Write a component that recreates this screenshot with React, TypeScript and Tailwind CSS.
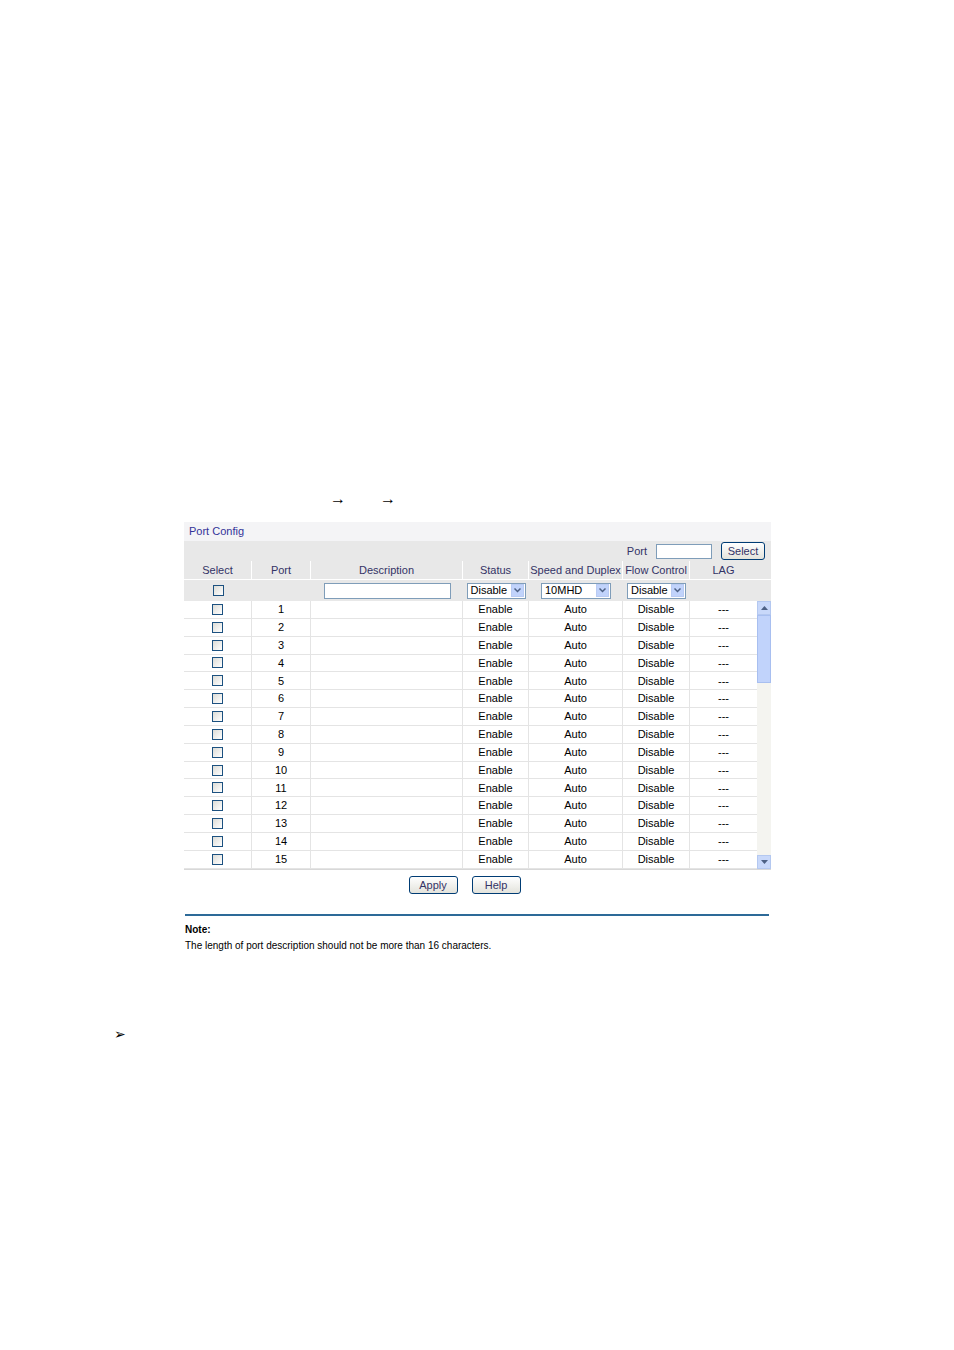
import React from 'react';

const cols = 'grid grid-cols-[68px_59px_152px_66px_94px_67px_67px_14px]';
const font = { fontFamily: '"Liberation Sans", Arial, sans-serif' };

const Check = () => (
  <span className="inline-block w-[11px] h-[11px] border border-[#1c5180] bg-gradient-to-br from-[#dcdcd7] to-white" />
);

const Sel = ({ label, w }: { label: string; w: string }) => (
  <div className={`${w} h-[16px] border border-[#7f9db9] bg-white flex items-center justify-between pl-[3px] text-[11px] text-black`}>
    <span>{label}</span>
    <span className="w-[13px] h-[13px] mr-[1px] bg-[#c1d3fb] border border-[#b9cbf3] flex items-center justify-center">
      <svg width="7" height="5" viewBox="0 0 7 5"><path d="M0.5 0.5 L3.5 3.5 L6.5 0.5" stroke="#4d6185" strokeWidth="1.5" fill="none" /></svg>
    </span>
  </div>
);

const Btn = ({ label }: { label: string }) => (
  <button className="w-[49px] h-[18px] border border-[#003c74] rounded-[3px] bg-gradient-to-b from-white to-[#e3e3dc] text-[11px] text-[#333366]">{label}</button>
);

export default function App() {
  const rows = Array.from({ length: 15 }, (_, i) => i + 1);
  return (
    <div className="w-[954px] h-[1350px] bg-white relative" style={font}>
      <div className="h-[487px]" />
      <div className="flex text-[16px] text-black h-[22px]">
        <span className="ml-[330px]">→</span>
        <span className="ml-[34px]">→</span>
      </div>
      <div className="h-[13px]" />
      <div className="ml-[184px] w-[587px]">
        <div className="h-[19px] bg-[#f4f4f6] text-[11px] text-[#333399] pl-[5px] flex items-center">Port Config</div>
        <div className="h-[20px] bg-[#e8e8e8] flex items-center justify-end pr-[6px] text-[11px] text-[#333366]">
          <span className="mr-[9px]">Port</span>
          <span className="w-[56px] h-[15px] border border-[#7f9db9] bg-white mr-[9px]" />
          <button className="w-[44px] h-[18px] border border-[#003c74] rounded-[3px] bg-gradient-to-b from-white to-[#e3e3dc] text-[11px] text-[#333366]">Select</button>
        </div>
        <div className={`${cols} h-[18px] bg-[#e8e8e8] text-[11px] text-[#333366] text-center items-center`}>
          {['Select', 'Port', 'Description', 'Status', 'Speed and Duplex', 'Flow Control', 'LAG', ''].map((h, i) => (
            <div key={i} className={`h-full flex items-center justify-center ${i < 6 ? 'border-r border-white' : ''} ${i === 4 ? 'whitespace-nowrap' : ''}`}>{h}</div>
          ))}
        </div>
        <div className={`${cols} h-[22px] bg-[#e8e8e8] items-center border-t border-white`}>
          <div className="flex justify-center"><Check /></div>
          <div />
          <div className="flex justify-center"><span className="w-[127px] h-[16px] border border-[#7f9db9] bg-white" /></div>
          <div className="flex justify-center"><Sel label="Disable" w="w-[59px]" /></div>
          <div className="flex justify-center"><Sel label="10MHD" w="w-[70px]" /></div>
          <div className="flex justify-center"><Sel label="Disable" w="w-[59px]" /></div>
          <div />
          <div />
        </div>
        <div className="flex border-b border-[#d8d8d8]">
          <div>
            {rows.map(n => (
              <div key={n} className={`${cols.replace('_14px', '')} grid-cols-[68px_59px_152px_66px_94px_67px_67px] h-[17.85px] text-[11px] text-black text-center items-center border-b border-[#e4e4e4]`}>
                <div className="flex justify-center border-r border-[#e4e4e4] h-full items-center"><Check /></div>
                <div className="border-r border-[#e4e4e4] h-full flex items-center justify-center">{n}</div>
                <div className="border-r border-[#e4e4e4] h-full" />
                <div className="border-r border-[#e4e4e4] h-full flex items-center justify-center">Enable</div>
                <div className="border-r border-[#e4e4e4] h-full flex items-center justify-center">Auto</div>
                <div className="border-r border-[#e4e4e4] h-full flex items-center justify-center">Disable</div>
                <div className="h-full flex items-center justify-center">---</div>
              </div>
            ))}
          </div>
          <div className="w-[14px] bg-[#f4f4f0] flex flex-col">
            <div className="h-[14px] bg-[#c8d8fa] border border-[#b4c8f0] flex items-center justify-center">
              <svg width="7" height="4" viewBox="0 0 7 4"><path d="M0 4 L3.5 0 L7 4Z" fill="#4d6185" /></svg>
            </div>
            <div className="h-[68px] bg-[#c1d3fb] border border-[#a8bff0]" />
            <div className="flex-1" />
            <div className="h-[14px] bg-[#c8d8fa] border border-[#b4c8f0] flex items-center justify-center">
              <svg width="7" height="4" viewBox="0 0 7 4"><path d="M0 0 L3.5 4 L7 0Z" fill="#4d6185" /></svg>
            </div>
          </div>
        </div>
        <div className="flex justify-center gap-[14px] mt-[6px] pr-[26px]">
          <Btn label="Apply" />
          <Btn label="Help" />
        </div>
        <div className="mt-[20px] ml-[1px] w-[584px] border-t-2 border-[#2d6a98]" />
        <div className="text-[10px] text-black mt-[6px] ml-[1px] leading-[16px]">
          <div className="font-bold">Note:</div>
          <div>The length of port description should not be more than 16 characters.</div>
        </div>
      </div>
      <div className="absolute left-[114px] top-[1024px] text-[14px] text-black">➢</div>
    </div>
  );
}
